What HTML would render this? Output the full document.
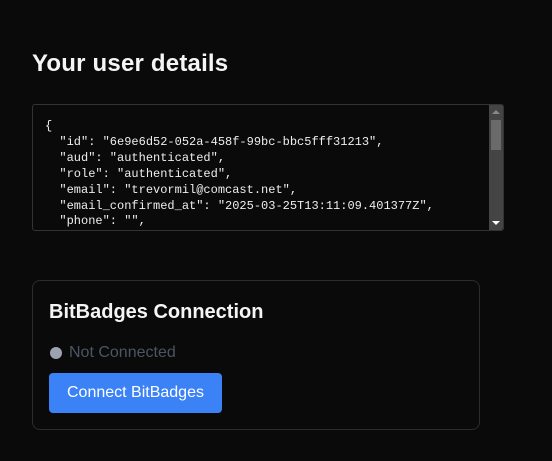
<!DOCTYPE html>
<html><head><style>
body{margin:0;background:#0a0a0a;width:552px;height:461px;overflow:hidden;font-family:"Liberation Sans",sans-serif;color:#f5f5f5;position:relative}
h1{position:absolute;left:32px;top:50px;margin:0;font-size:24px;font-weight:bold;letter-spacing:0.2px}
.box{position:absolute;left:32px;top:104px;width:470px;height:125px;border:1px solid #333;border-radius:3px;background:#0a0a0a;overflow:hidden}
pre{margin:0;position:absolute;left:12px;top:14px;font-family:"Liberation Mono",monospace;font-size:12px;line-height:15.9px;color:#eee}
.sb{position:absolute;right:0;top:0;width:14px;height:125px;background:#444}
.th{position:absolute;left:2px;top:15px;width:10px;height:30px;background:#6a6a6a}
.up{position:absolute;left:3px;top:5px;border-left:4px solid transparent;border-right:4px solid transparent;border-bottom:4px solid #888}
.dn{position:absolute;left:3px;bottom:5px;border-left:4px solid transparent;border-right:4px solid transparent;border-top:4px solid #fff}
.card{position:absolute;left:32px;top:280px;width:446px;height:148px;border:1px solid #2c2c2c;border-radius:8px}
h2{position:absolute;left:16px;top:20px;margin:0;font-size:20px;font-weight:bold}
.dot{position:absolute;left:17px;top:66px;width:12px;height:12px;border-radius:50%;background:#9ca3af}
.st{position:absolute;left:36px;top:63px;font-size:16px;color:#4b5563}
.btn{position:absolute;left:16px;top:92px;width:173px;height:40px;background:#3b82f6;border-radius:4px;color:#fff;font-size:16px;line-height:40px;text-align:center}
</style></head><body>
<h1>Your user details</h1>
<div class="box"><pre>{
  "id": "6e9e6d52-052a-458f-99bc-bbc5fff31213",
  "aud": "authenticated",
  "role": "authenticated",
  "email": "trevormil@comcast.net",
  "email_confirmed_at": "2025-03-25T13:11:09.401377Z",
  "phone": "",</pre>
<div class="sb"><div class="up"></div><div class="th"></div><div class="dn"></div></div></div>
<div class="card">
<h2>BitBadges Connection</h2>
<div class="dot"></div><div class="st">Not Connected</div>
<div class="btn">Connect BitBadges</div>
</div>
</body></html>
